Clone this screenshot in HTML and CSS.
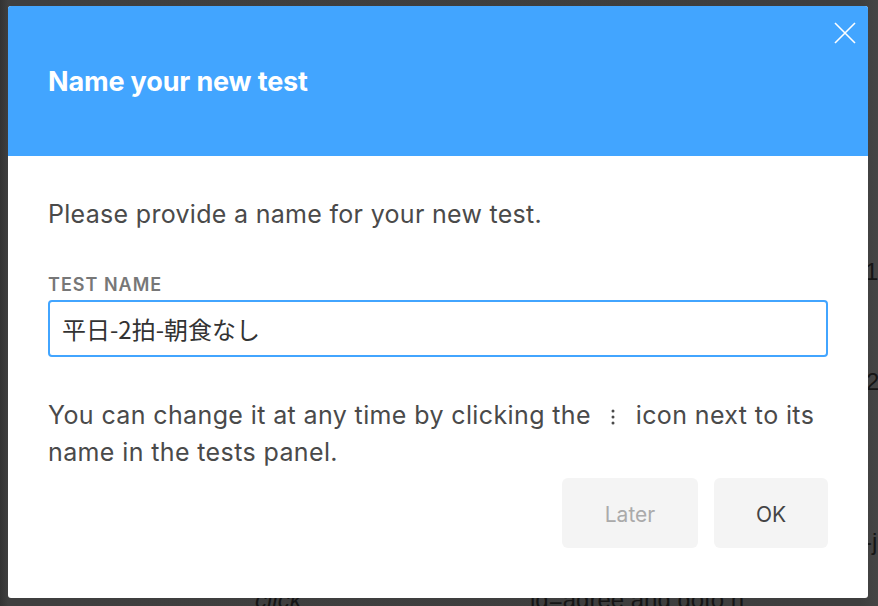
FILE: index.html
```html
<!DOCTYPE html>
<html>
<head>
<meta charset="utf-8">
<link rel="stylesheet" href="styles.css">
</head>
<body>
<div class="app-behind">
  <span class="bg-frag f1">12</span>
  <span class="bg-frag f2">2</span>
  <span class="bg-frag f3">-j</span>
  <span class="bg-frag f4">click</span>
  <span class="bg-frag f5">id=agree and goto n</span>
</div>
<div class="dialog">
  <div class="dialog-header">
    <h1 class="dialog-title">Name your new test</h1>
    <button class="close-btn" aria-label="Close">
      <svg width="22" height="22" viewBox="0 0 22 22"><path d="M1 1 L21 21 M21 1 L1 21" stroke="#fff" stroke-width="1.6" fill="none"/></svg>
    </button>
  </div>
  <div class="dialog-body">
    <p class="intro">Please provide a name for your new test.</p>
    <label class="field-label">TEST NAME</label>
    <div class="input-box">平日-2拍-朝食なし</div>
    <p class="hint">You can change it at any time by clicking the <svg class="kebab" width="6" height="20" viewBox="0 0 6 20"><circle cx="3" cy="4" r="1.5" fill="#4a4a4a"/><circle cx="3" cy="10" r="1.5" fill="#4a4a4a"/><circle cx="3" cy="16" r="1.5" fill="#4a4a4a"/></svg> icon next to its name in the tests panel.</p>
    <div class="actions">
      <button class="btn btn-later">Later</button>
      <button class="btn btn-ok">OK</button>
    </div>
  </div>
</div>
</body>
</html>
```

FILE: styles.css
```css
html, body {
  margin: 0;
  padding: 0;
}
body {
  width: 878px;
  height: 606px;
  overflow: hidden;
  background: linear-gradient(90deg, #333 0px, #3f3f3f 8px, #3e3e3e 860px, #454545 878px);
  padding: 6px 0 0 8px;
  box-sizing: border-box;
  position: relative;
  font-family: Inter, "Noto Sans CJK JP", sans-serif;
}
.app-behind {
  position: absolute;
  inset: 0;
}
.bg-frag {
  position: absolute;
  color: #151515;
  font-family: "Liberation Sans", sans-serif;
  font-size: 24px;
}
.f1 { left: 865px; top: 258px; }
.f2 { left: 866px; top: 368px; }
.f3 { left: 864px; top: 528px; }
.f4 { left: 255px; top: 586px; font-style: italic; }
.f5 { left: 530px; top: 586px; }
.dialog {
  position: relative;
  width: 860px;
  height: 592px;
  background: #fff;
  border-radius: 3px;
  overflow: hidden;
  display: flex;
  flex-direction: column;
}
.dialog-header {
  height: 150px;
  background: #42a5ff;
  display: flex;
  align-items: center;
  padding: 0 40px;
  flex: none;
}
.dialog-title {
  margin: 0;
  color: #fff;
  font-size: 27px;
  font-weight: 700;
  letter-spacing: -0.15px;
}
.close-btn {
  position: absolute;
  top: 16px;
  right: 12px;
  width: 22px;
  height: 22px;
  padding: 0;
  border: 0;
  background: none;
  display: flex;
}
.dialog-body {
  padding: 40px 40px 0;
  display: flex;
  flex-direction: column;
}
.intro {
  margin: 0;
  font-size: 25px;
  line-height: 36px;
  letter-spacing: 0.3px;
  color: #4a4a4a;
}
.field-label {
  margin-top: 43px;
  font-size: 18px;
  line-height: 20px;
  font-weight: 600;
  color: #777;
  letter-spacing: 1px;
}
.input-box {
  margin-top: 5px;
  height: 57px;
  box-sizing: border-box;
  border: 2px solid #42a5ff;
  border-radius: 4px;
  padding: 0 12px;
  display: flex;
  align-items: center;
  font-family: "Noto Sans CJK JP", sans-serif;
  font-size: 24px;
  color: #333;
}
.hint {
  margin: 40px 0 0;
  font-size: 25px;
  line-height: 37px;
  letter-spacing: 0.38px;
  color: #4a4a4a;
}
.kebab {
  vertical-align: -3px;
  margin: 0 12px;
}
.actions {
  margin-top: 7px;
  display: flex;
  justify-content: flex-end;
  gap: 16px;
}
.btn {
  height: 70px;
  border: 0;
  border-radius: 6px;
  background: #f4f4f4;
  font-family: Inter, sans-serif;
  font-size: 21px;
  padding: 3px 0 0;
}
.btn-later {
  width: 136px;
  color: #aaa;
}
.btn-ok {
  width: 114px;
  color: #444;
}
```
